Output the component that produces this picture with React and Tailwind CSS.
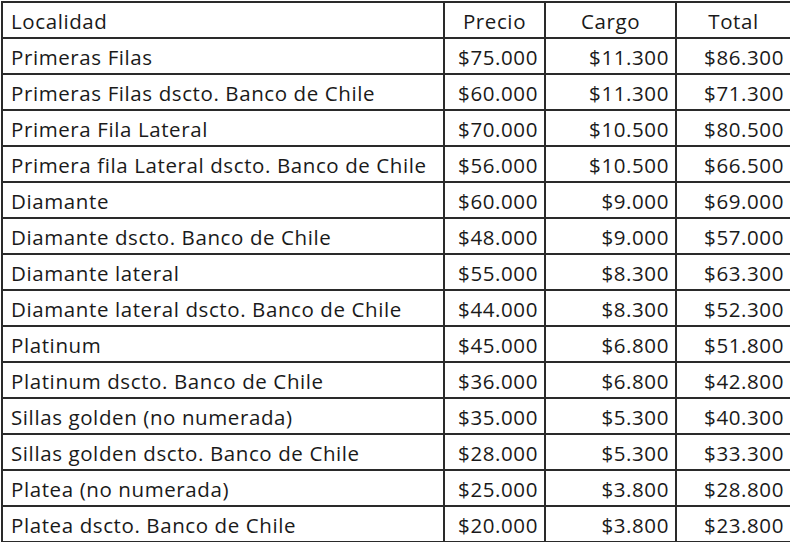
import React from 'react';

const rows = [
  ['Primeras Filas', '$75.000', '$11.300', '$86.300'],
  ['Primeras Filas dscto. Banco de Chile', '$60.000', '$11.300', '$71.300'],
  ['Primera Fila Lateral', '$70.000', '$10.500', '$80.500'],
  ['Primera fila Lateral dscto. Banco de Chile', '$56.000', '$10.500', '$66.500'],
  ['Diamante', '$60.000', '$9.000', '$69.000'],
  ['Diamante dscto. Banco de Chile', '$48.000', '$9.000', '$57.000'],
  ['Diamante lateral', '$55.000', '$8.300', '$63.300'],
  ['Diamante lateral dscto. Banco de Chile', '$44.000', '$8.300', '$52.300'],
  ['Platinum', '$45.000', '$6.800', '$51.800'],
  ['Platinum dscto. Banco de Chile', '$36.000', '$6.800', '$42.800'],
  ['Sillas golden (no numerada)', '$35.000', '$5.300', '$40.300'],
  ['Sillas golden dscto. Banco de Chile', '$28.000', '$5.300', '$33.300'],
  ['Platea (no numerada)', '$25.000', '$3.800', '$28.800'],
  ['Platea dscto. Banco de Chile', '$20.000', '$3.800', '$23.800'],
];

const rowCls = 'grid grid-cols-[442px_101px_131px_115px] h-[36px] border-b-2 border-[#2a2a2a]';
const cell = 'flex items-center pt-[3px] border-r-2 border-[#2a2a2a] whitespace-nowrap';

const App = () => {
  return (
    <div className='w-[790px] h-[542px] overflow-hidden bg-white'>
      <div
        className='mt-[1px] ml-[1px] w-[791px] border-t-2 border-l-2 border-[#2a2a2a] text-[#1a1a1a] text-[20.5px] tracking-[0.6px] leading-none'
        style={{ fontFamily: '"Open Sans", "Noto Sans", sans-serif', fontVariantLigatures: 'none' }}
      >
        <div className={rowCls}>
          <div className={cell + ' pl-[8px]'}>Localidad</div>
          <div className={cell + ' justify-center'}>Precio</div>
          <div className={cell + ' justify-center'}>Cargo</div>
          <div className={cell + ' justify-center'}>Total</div>
        </div>
        {rows.map((r) => (
          <div key={r[0]} className={rowCls}>
            <div className={cell + ' pl-[8px]'}>{r[0]}</div>
            <div className={cell + ' justify-end pr-[6px]'}>{r[1]}</div>
            <div className={cell + ' justify-end pr-[6px]'}>{r[2]}</div>
            <div className={cell + ' justify-end pr-[6px]'}>{r[3]}</div>
          </div>
        ))}
      </div>
    </div>
  );
};

export default App;
